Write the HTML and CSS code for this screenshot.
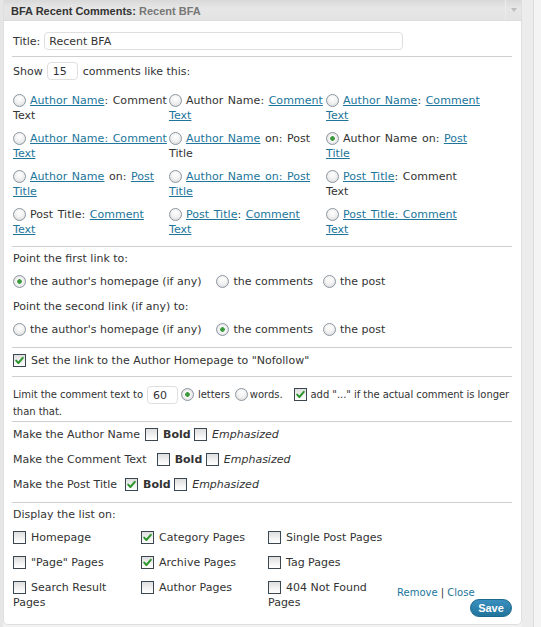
FILE: index.html
```html
<!DOCTYPE html>
<html>
<head>
<meta charset="utf-8">
<title>BFA Recent Comments</title>
<link rel="stylesheet" href="styles.css">
</head>
<body>
<div class="page">
  <div class="left-edge"></div>
  <div class="widget">
    <div class="widget-top">
      <div class="widget-title"><b>BFA Recent Comments:</b> <span class="in-title">Recent BFA</span></div>
      <div class="widget-action"><span class="arrow"></span></div>
    </div>
    <div class="widget-inside">
      <div class="sec sec-title">
        <label class="line-row">Title:<input class="text-input title-input" type="text" value="Recent BFA"></label>
      </div>

      <div class="sec sec-format">
        <div class="line-row">Show<input class="text-input small-input" type="text" value="15"><span class="after-input">comments like this:</span></div>
        <div class="format-grid">
          <label class="opt"><span class="radio"></span><a href="#">Author Name</a>: Comment Text</label>
          <label class="opt"><span class="radio"></span>Author Name: <a href="#">Comment Text</a></label>
          <label class="opt"><span class="radio"></span><a href="#">Author Name</a>: <a href="#">Comment Text</a></label>

          <label class="opt"><span class="radio"></span><a href="#">Author Name: Comment Text</a></label>
          <label class="opt"><span class="radio"></span><a href="#">Author Name</a> on: Post Title</label>
          <label class="opt"><span class="radio on"></span>Author Name on: <a href="#">Post Title</a></label>

          <label class="opt"><span class="radio"></span><a href="#">Author Name</a> on: <a href="#">Post Title</a></label>
          <label class="opt"><span class="radio"></span><a href="#">Author Name on: Post Title</a></label>
          <label class="opt"><span class="radio"></span><a href="#">Post Title</a>: Comment Text</label>

          <label class="opt"><span class="radio"></span>Post Title: <a href="#">Comment Text</a></label>
          <label class="opt"><span class="radio"></span><a href="#">Post Title</a>: <a href="#">Comment Text</a></label>
          <label class="opt"><span class="radio"></span><a href="#">Post Title: Comment Text</a></label>
        </div>
      </div>

      <div class="sec sec-links">
        <p class="label-line">Point the first link to:</p>
        <div class="choice-row">
          <label class="choice c1"><span class="radio on"></span>the author's homepage (if any)</label>
          <label class="choice c2"><span class="radio"></span>the comments</label>
          <label class="choice"><span class="radio"></span>the post</label>
        </div>
        <p class="label-line second">Point the second link (if any) to:</p>
        <div class="choice-row">
          <label class="choice c1"><span class="radio"></span>the author's homepage (if any)</label>
          <label class="choice c2"><span class="radio on"></span>the comments</label>
          <label class="choice"><span class="radio"></span>the post</label>
        </div>
      </div>

      <div class="sec sec-nofollow">
        <label class="choice"><span class="check on"><svg viewBox="0 0 11 11"><path d="M2.2 5.6 L4.4 8 L8.8 2.8" /></svg></span>Set the link to the Author Homepage to "Nofollow"</label>
      </div>

      <div class="sec sec-limit">
        <div class="limit-text">Limit the comment text to<input class="text-input small-input" type="text" value="60"><span class="radio on r-letters"></span>letters<span class="radio r-words"></span>words.<span class="check on c-add"><svg viewBox="0 0 11 11"><path d="M2.2 5.6 L4.4 8 L8.8 2.8" /></svg></span>add "..." if the actual comment is longer than that.</div>
      </div>

      <div class="sec sec-style">
        <div class="style-row">Make the Author Name<span class="check lead-1"></span><b>Bold</b> <span class="check"></span><i>Emphasized</i></div>
        <div class="style-row">Make the Comment Text<span class="check lead-2"></span><b>Bold</b> <span class="check"></span><i>Emphasized</i></div>
        <div class="style-row">Make the Post Title<span class="check on lead-3"><svg viewBox="0 0 11 11"><path d="M2.2 5.6 L4.4 8 L8.8 2.8" /></svg></span><b>Bold</b> <span class="check"></span><i>Emphasized</i></div>
      </div>

      <div class="sec sec-display">
        <p class="label-line">Display the list on:</p>
        <div class="display-wrap">
          <div class="display-grid">
            <label class="opt"><span class="check"></span>Homepage</label>
            <label class="opt"><span class="check on"><svg viewBox="0 0 11 11"><path d="M2.2 5.6 L4.4 8 L8.8 2.8" /></svg></span>Category Pages</label>
            <label class="opt"><span class="check"></span>Single Post Pages</label>
            <label class="opt"><span class="check"></span>"Page" Pages</label>
            <label class="opt"><span class="check on"><svg viewBox="0 0 11 11"><path d="M2.2 5.6 L4.4 8 L8.8 2.8" /></svg></span>Archive Pages</label>
            <label class="opt"><span class="check"></span>Tag Pages</label>
            <label class="opt"><span class="check"></span>Search Result Pages</label>
            <label class="opt"><span class="check"></span>Author Pages</label>
            <label class="opt"><span class="check"></span>404 Not Found Pages</label>
          </div>
          <div class="actions">
            <div class="action-links"><a href="#">Remove</a> | <a href="#">Close</a></div>
            <button class="save" type="button">Save</button>
          </div>
        </div>
      </div>
    </div>
  </div>
  <div class="gutter"></div>
</div>
</body>
</html>
```

FILE: styles.css
```css
* { box-sizing: border-box; }
html, body { margin: 0; padding: 0; }
body {
  width: 541px;
  height: 627px;
  overflow: hidden;
  background: #f1f1f1;
  font-family: "DejaVu Sans", Verdana, sans-serif;
  font-size: 11px;
  line-height: 15px;
  color: #333;
}
p { margin: 0; }
a { color: #21759b; }

.page { display: flex; height: 627px; }
.left-edge { width: 3px; background: #e6e6e6; }
.gutter {
  width: 19px;
  background: linear-gradient(to right, #ececec 0, #ececec 11px, #dadada 11px, #dadada 12px, #f4f4f4 12px);
}

.widget {
  width: 519px;
  height: 625px;
  background: #fff;
  border: 1px solid #dfdfdf;
  border-top: 0;
  border-radius: 0 0 5px 5px;
}
.widget-top {
  height: 21px;
  display: flex;
  justify-content: space-between;
  align-items: stretch;
  background: linear-gradient(to bottom, #d9d9d9, #e6e6e6 40%, #e3e3e3);
  border-bottom: 1px solid #dcdcdc;
}
.widget-title {
  padding-left: 7px;
  padding-top: 4px;
  font-family: "Liberation Sans", Arial, sans-serif;
  font-size: 11px;
  line-height: 15px;
  color: #333;
}
.widget-title b { font-weight: bold; }
.in-title { color: #777; font-weight: bold; }
.widget-action {
  width: 16px;
  border-left: 1px solid #ececec;
  display: flex;
  align-items: center;
  justify-content: center;
}
.arrow {
  width: 0; height: 0;
  border-top: 4px solid #bdbdbd;
  border-left: 3px solid transparent;
  border-right: 3px solid transparent;
}

.widget-inside { padding: 0 9px 0 8px; }
.sec { border-bottom: 1px solid #cfcfcf; }
.sec-display { border-bottom: 0; }

.line-row { display: flex; align-items: center; gap: 4px; padding-left: 1px; }
.after-input { margin-left: 1px; }
.text-input {
  font-family: "DejaVu Sans", Verdana, sans-serif;
  font-size: 11px;
  color: #333;
  height: 18px;
  border: 1px solid #dfdfdf;
  border-radius: 4px;
  padding: 0 4px;
  background: #fff;
  outline: none;
}
.title-input { width: 359px; }
.small-input { width: 31px; padding-left: 5px; }

.sec-title { padding: 11px 0 6px; }

.sec-format { padding: 5px 0 9px; }
.format-grid {
  margin-top: 13px;
  display: grid;
  grid-template-columns: 156px 157px 157px;
  row-gap: 8px;
  word-spacing: 0.9px;
  letter-spacing: 0.05px;
}
.opt { display: block; padding-left: 1px; }
.format-grid .opt { height: 30px; }

.radio {
  display: inline-block;
  width: 13px;
  height: 13px;
  border-radius: 50%;
  border: 1px solid #8b96a0;
  background: radial-gradient(circle at 50% 35%, #ffffff 0, #f2f2f2 45%, #d6d6d6 100%);
  vertical-align: -3px;
  margin-right: 4px;
}
.radio.on {
  background: radial-gradient(circle, #3b9a3b 0, #3b9a3b 2px, #ffffff 2.6px, #f2f2f2 45%, #d6d6d6 100%);
}
.check {
  display: inline-block;
  width: 13px;
  height: 13px;
  border: 1px solid #3b4750;
  background: linear-gradient(to bottom, #dedede, #f7f7f7 70%, #ffffff);
  vertical-align: -3px;
  margin-right: 5px;
}
.check svg {
  display: block;
  width: 11px;
  height: 11px;
}
.check svg path {
  fill: none;
  stroke: #2d962d;
  stroke-width: 2;
  stroke-linecap: round;
  stroke-linejoin: round;
}

.sec-links { padding: 4px 0 10px; }
.choice-row { display: flex; height: 15px; margin-top: 8px; padding-left: 1px; }
.choice-row .c1 { margin-right: 15px; }
.choice-row .c2 { margin-right: 10px; }
.label-line { padding-left: 1px; }
.label-line.second { margin-top: 10px; }
.choice { display: inline-block; white-space: nowrap; }

.sec-nofollow { padding: 5px 0 8px 1px; }

.sec-limit { padding: 9px 0 1px 1px; }
.limit-text {
  font-size: 10px;
  line-height: 16px;
  letter-spacing: -0.05px;
}
.limit-text .small-input { vertical-align: middle; margin-left: 4px; }
.limit-text .radio { vertical-align: -3px; }
.r-letters { margin-left: 3px; margin-right: 4px; }
.r-words { margin-left: 5px; margin-right: 2px; }
.c-add { margin-left: 11px; margin-right: 4px; }

.sec-style { padding: 4px 0 9px 1px; }
.style-row { height: 17px; line-height: 17px; }
.style-row + .style-row { margin-top: 8px; }
.style-row .lead-1 { margin-left: 5px; }
.style-row .lead-2 { margin-left: 10px; }
.style-row .lead-3 { margin-left: 8px; }
.style-row i { font-style: italic; }

.sec-display { padding: 4px 0 7px; }
.display-wrap { display: flex; margin-top: 8px; }
.display-grid {
  display: grid;
  grid-template-columns: 128px 127px 128px;
  row-gap: 10px;
  align-content: start;
}
.actions {
  flex: 1;
  display: flex;
  flex-direction: column;
  padding-top: 55px;
}
.action-links {
  font-size: 10px;
  line-height: 15px;
  padding-left: 2px;
  color: #333;
}
.action-links a { text-decoration: none; }
.save {
  align-self: flex-end;
  width: 42px;
  height: 18px;
  margin-top: -1px;
  border: 1px solid #1d6a8e;
  border-radius: 9px;
  background: linear-gradient(to bottom, #3a8fbf, #21759b);
  color: #fff;
  font-family: "Liberation Sans", Arial, sans-serif;
  font-weight: bold;
  font-size: 11px;
  line-height: 16px;
  padding: 0;
}
```
